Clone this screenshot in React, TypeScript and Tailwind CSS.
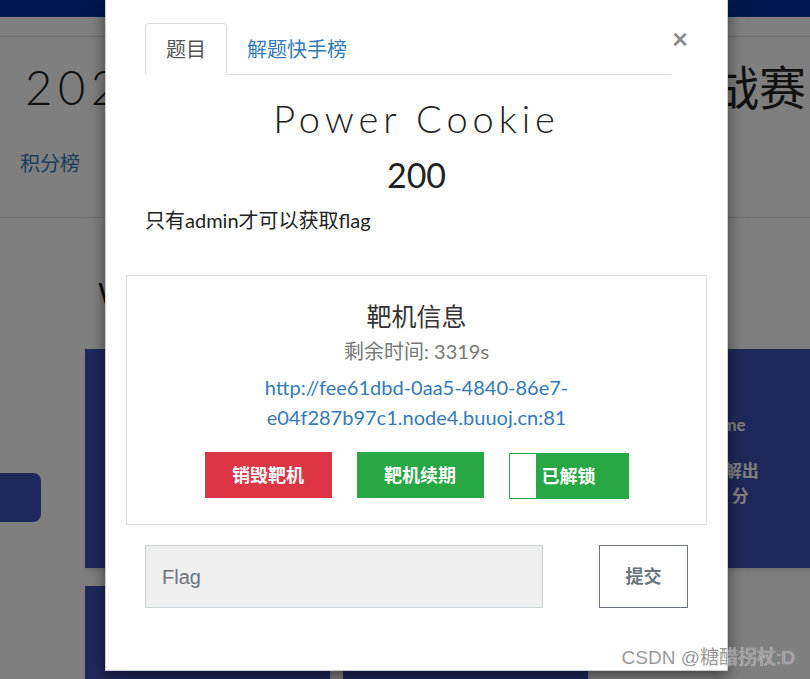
export default function App() {
  return (
    <div className="relative h-[679px] w-[810px] overflow-hidden bg-white font-['Lato','Noto_Sans_CJK_SC',sans-serif] text-[#333]">
      {/* page behind the dialog */}
      <div className="h-[17px] bg-[#00309a]" />
      <div className="h-[19px]" />
      <header className="h-[182px] border-y border-[#dedede]">
        <div className="flex items-start justify-between pl-[25px] pr-[4px] pt-[22px]">
          <span className="text-[47px] font-light leading-[56px] tracking-[0.12em] text-[#222]">2021 CTF</span>
          <span className="text-[47px] leading-[56px] text-[#222]">线上挑战赛</span>
        </div>
        <nav className="mt-[33px] flex gap-8 pl-[20px] text-[20px] text-[#337ab7]">
          <span>积分榜</span>
          <span>题目</span>
        </nav>
      </header>
      <div className="flex">
        <div className="w-[85px] shrink-0 pt-[255px]">
          <div className="h-[49px] w-[41px] rounded-r-lg bg-[#3f51b5]" />
        </div>
        <div className="flex-1 pt-[57px]">
          <h2 className="pl-[13px] text-[30px] leading-[36px] text-[#222]">Web</h2>
          <div className="mt-[38px] grid grid-cols-[245px_245px_245px] gap-x-[13px] gap-y-[18px]">
            <div className="h-[219px] bg-[#3f51b5] shadow-md" />
            <div className="h-[219px] bg-[#3f51b5] shadow-md" />
            <div className="flex h-[219px] flex-col items-center bg-[#3f51b5] pt-[65px] font-bold text-white shadow-md">
              <span className="text-[17px] leading-[22px]">Game</span>
              <span className="mt-[22px] text-[17px] leading-[25px]">10人解出</span>
              <span className="text-[17px] leading-[25px]">200 分</span>
            </div>
            <div className="h-[219px] bg-[#3f51b5] shadow-md" />
            <div className="h-[219px] bg-[#3f51b5] shadow-md" />
          </div>
        </div>
      </div>

      {/* backdrop */}
      <div className="absolute inset-0 bg-black/50" />

      {/* dialog */}
      <div className="absolute left-[105px] top-0 h-[671px] w-[623px] border-x border-b border-black/20 bg-white pt-[23px] shadow-[0_5px_15px_rgba(0,0,0,0.5)]">
        <div className="flex pl-[39px]">
          <div className="flex w-[526px] border-b border-[#ddd]">
            <div className="-mb-px flex h-[52px] items-center rounded-t border border-[#ddd] border-b-white bg-white px-5 text-[20px] text-[#555]">
              题目
            </div>
            <div className="flex h-[51px] items-center px-5 text-[20px] text-[#337ab7]">解题快手榜</div>
          </div>
          <button type="button" className="ml-[1px] mt-[3px] h-[24px] text-[28px] font-bold leading-[24px] text-[#8a8a8a]">
            ×
          </button>
        </div>

        <h1 className="mt-[20px] text-center text-[38px] font-light leading-[46px] tracking-[0.13em] text-[#222]">
          Power Cookie
        </h1>
        <div className="mt-[13px] text-center text-[34px] leading-[41px] text-[#222]">200</div>
        <p className="mt-[11px] pl-[39px] text-[20px] leading-[28px] text-[#222]">只有admin才可以获取flag</p>

        <div className="mx-[20px] mt-[41px] border border-[#ddd] pb-[25px] pt-[25px] text-center">
          <h3 className="text-[25px] leading-[30px] text-[#333]">靶机信息</h3>
          <div className="mt-[6px] text-[20px] leading-[28px] text-[#777]">剩余时间: 3319s</div>
          <div className="mt-[7px] text-[20px] leading-[30px] text-[#337ab7]">
            http://fee61dbd-0aa5-4840-86e7-
            <br />
            e04f287b97c1.node4.buuoj.cn:81
          </div>
          <div className="mt-[20px] flex justify-center gap-[25px]">
            <button type="button" className="h-[46px] w-[127px] bg-[#dc3545] text-[18px] font-bold text-white">
              销毁靶机
            </button>
            <button type="button" className="h-[46px] w-[127px] bg-[#28a745] text-[18px] font-bold text-white">
              靶机续期
            </button>
            <button
              type="button"
              className="relative mt-[1px] h-[46px] w-[120px] border border-[#28a745] bg-[#28a745] text-[18px] font-bold text-white"
            >
              <span className="absolute inset-y-0 left-0 w-[26px] bg-white" />
              已解锁
            </button>
          </div>
        </div>

        <div className="mt-[20px] flex pl-[39px]">
          <div className="flex h-[63px] w-[398px] items-center border border-[#ced4da] bg-[#efefef] pl-[16px] font-['Liberation_Sans',sans-serif] text-[20px] text-[#6c757d]">
            Flag
          </div>
          <button
            type="button"
            className="ml-[56px] h-[63px] w-[89px] border border-[#6c757d] text-[18px] font-bold text-[#6c757d]"
          >
            提交
          </button>
        </div>
      </div>

      {/* watermark */}
      <div className="absolute bottom-[7px] right-[15px] font-['Liberation_Sans','Noto_Sans_CJK_SC',sans-serif] text-[19px] text-[#9a9a9a] [text-shadow:0_0_1px_#fff]">
        CSDN @糖醋拐杖:D
      </div>
    </div>
  );
}
